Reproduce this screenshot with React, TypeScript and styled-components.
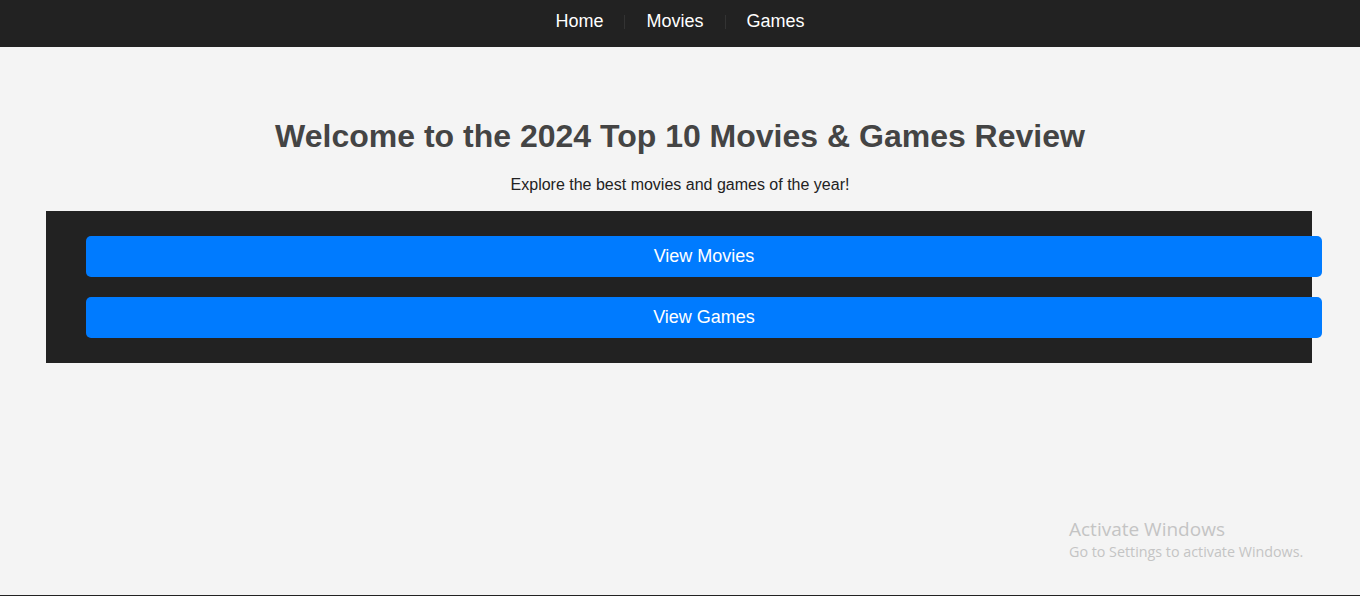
import React from "react";
import styled, { createGlobalStyle } from "styled-components";

const Global = createGlobalStyle`
  html, body { margin: 0; padding: 0; }
  body {
    background: #f4f4f4;
    font-family: "Liberation Sans", Arial, sans-serif;
    color: #333;
  }
`;

const NavBar = styled.nav`
  height: 47px;
  box-sizing: border-box;
  padding-bottom: 4px;
  background: #222;
  display: flex;
  justify-content: center;
  align-items: center;
`;

const NavList = styled.ul`
  list-style: none;
  margin: 0;
  padding: 0;
  display: flex;
  align-items: center;
`;

const NavLink = styled.a`
  color: #fff;
  font-size: 18px;
  text-decoration: none;
  padding: 0 21px;
  line-height: 21px;
`;

const Sep = styled.span`
  width: 1px;
  height: 14px;
  background: #333;
`;

const Main = styled.main`
  min-height: 548px;
  padding-top: 71px;
  box-sizing: border-box;
`;

const Title = styled.h1`
  margin: 0;
  text-align: center;
  font-size: 32px;
  font-weight: bold;
  color: #444;
  line-height: 37px;
`;

const Subtitle = styled.p`
  margin: 20px 0 17px;
  text-align: center;
  font-size: 16px;
  line-height: 19px;
  color: #222;
`;

const Panel = styled.section`
  background: #222;
  margin: 0 48px 0 46px;
  padding: 25px 40px;
  display: flex;
  flex-direction: column;
  gap: 20px;
`;

const BigButton = styled.button`
  display: block;
  width: 100%;
  box-sizing: content-box;
  padding: 10px 25px;
  height: 21px;
  border: none;
  border-radius: 5px;
  background: #007bff;
  color: #fff;
  font-family: "Liberation Sans", Arial, sans-serif;
  font-size: 18px;
  line-height: 21px;
  cursor: pointer;
`;

const Footer = styled.footer`
  height: 40px;
  background: #222;
`;

const Watermark = styled.div`
  position: absolute;
  left: 1069px;
  top: 516px;
  font-family: "Open Sans", "Noto Sans", sans-serif;
  color: #c4c4c4;
  pointer-events: none;
`;

const WmTitle = styled.div`
  font-size: 19px;
  line-height: 26px;
`;

const WmSub = styled.div`
  font-size: 14.3px;
  line-height: 19px;
`;

export default function App() {
  return (
    <>
      <Global />
      <NavBar>
        <NavList>
          <li><NavLink href="#">Home</NavLink></li>
          <Sep />
          <li><NavLink href="#">Movies</NavLink></li>
          <Sep />
          <li><NavLink href="#">Games</NavLink></li>
        </NavList>
      </NavBar>
      <Main>
        <Title>Welcome to the 2024 Top 10 Movies &amp; Games Review</Title>
        <Subtitle>Explore the best movies and games of the year!</Subtitle>
        <Panel>
          <BigButton>View Movies</BigButton>
          <BigButton>View Games</BigButton>
        </Panel>
      </Main>
      <Footer />
      <Watermark>
        <WmTitle>Activate Windows</WmTitle>
        <WmSub>Go to Settings to activate Windows.</WmSub>
      </Watermark>
    </>
  );
}
